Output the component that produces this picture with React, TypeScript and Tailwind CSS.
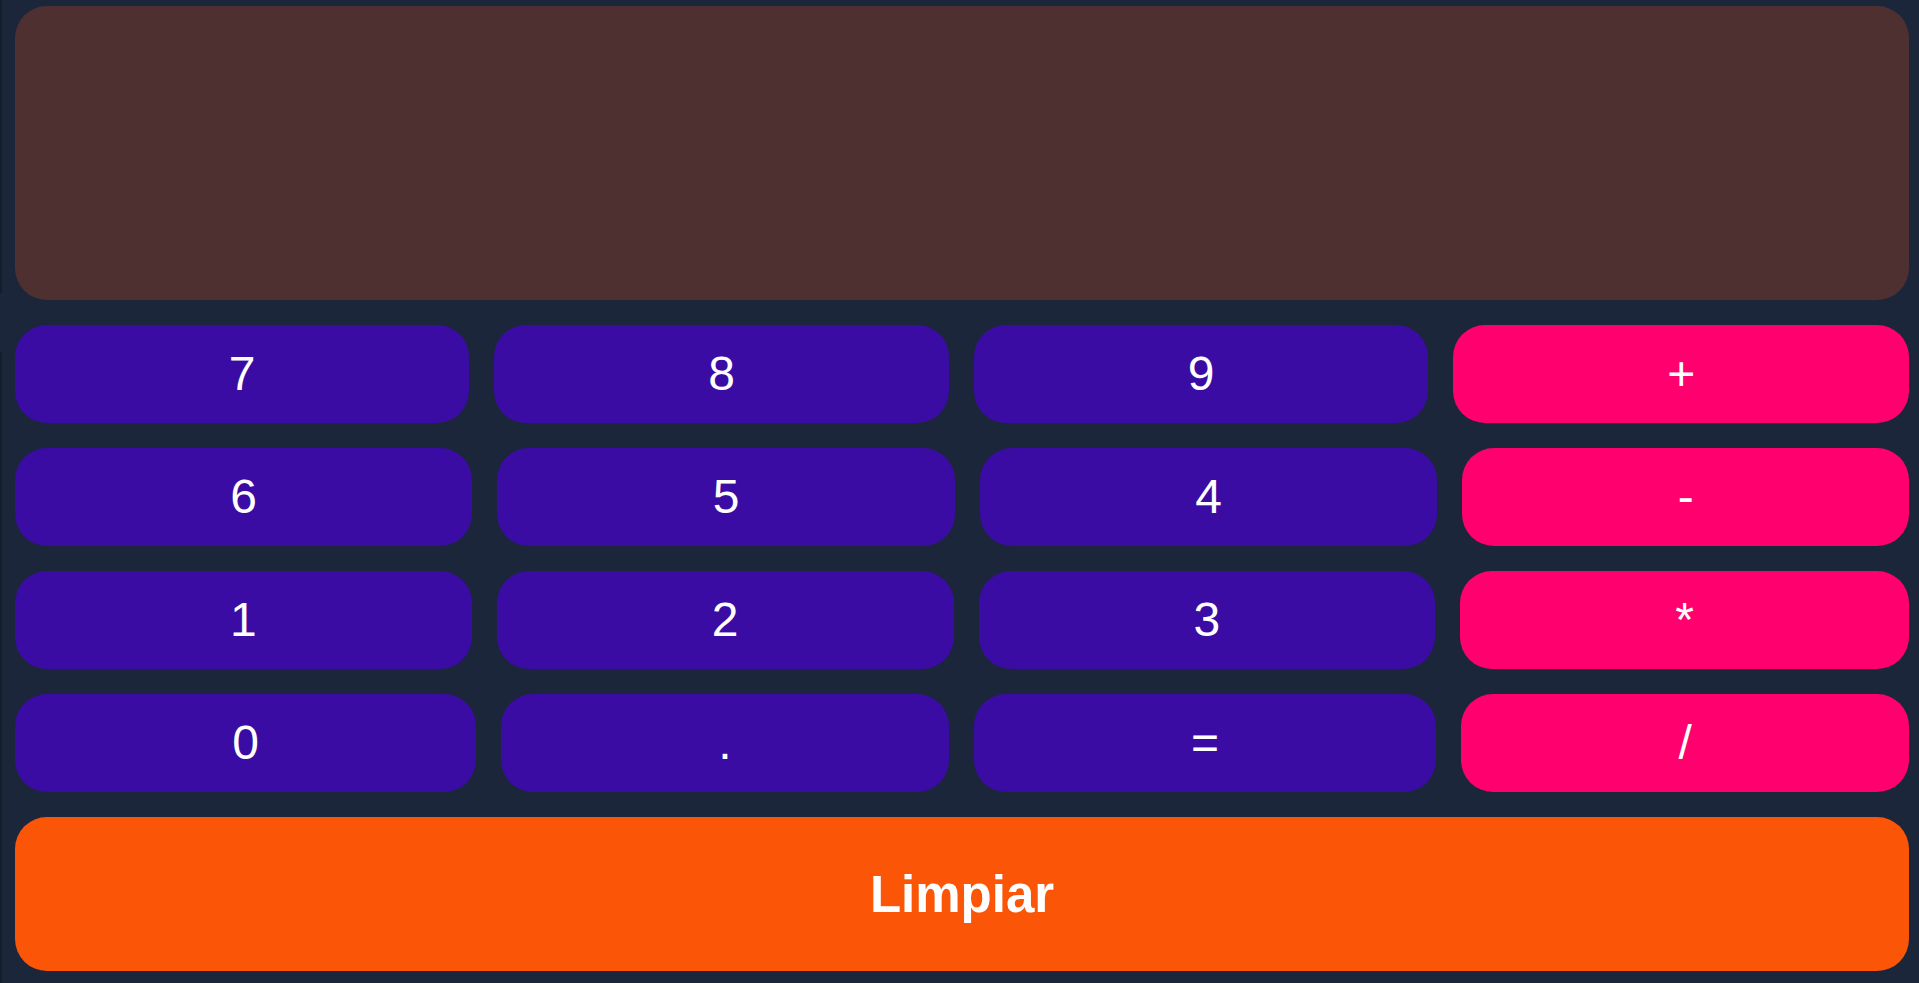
import React from "react";

const rows: { label: string; op?: boolean }[][] = [
  [{ label: "7" }, { label: "8" }, { label: "9" }, { label: "+", op: true }],
  [{ label: "6" }, { label: "5" }, { label: "4" }, { label: "-", op: true }],
  [{ label: "1" }, { label: "2" }, { label: "3" }, { label: "*", op: true }],
  [{ label: "0" }, { label: "." }, { label: "=" }, { label: "/", op: true }],
];

export default function App() {
  return (
    <div
      className="flex h-[983px] w-full bg-[#1b263b] text-white"
      style={{ fontFamily: '"Liberation Sans", Arial, sans-serif' }}
    >
      <div className="flex w-[2px] flex-col">
        <div className="h-[293px] bg-[#151d2c]" />
        <div className="h-[59px] bg-[#1b263b]" />
        <div className="flex-1 bg-[#151d2c]" />
      </div>
      <div className="flex flex-1 flex-col gap-[25px] pb-[11px] pl-[13px] pr-[10px] pt-[6px]">
        <div className="h-[294px] shrink-0 rounded-[32px] bg-[#4f3031]" />
        {rows.map((row, i) => (
          <div key={i} className="flex h-[98px] shrink-0 gap-[25px]">
            {row.map((b) => (
              <button
                key={b.label}
                className={`flex flex-auto items-center justify-center rounded-[32px] text-5xl leading-none text-white ${
                  b.op ? "bg-[#ff006e]" : "bg-[#3a0ca3]"
                }`}
              >
                {b.label}
              </button>
            ))}
          </div>
        ))}
        <button className="flex h-[154px] shrink-0 items-center justify-center rounded-[32px] bg-[#fb5607] text-[51px] font-bold leading-none text-white">
          Limpiar
        </button>
      </div>
    </div>
  );
}
